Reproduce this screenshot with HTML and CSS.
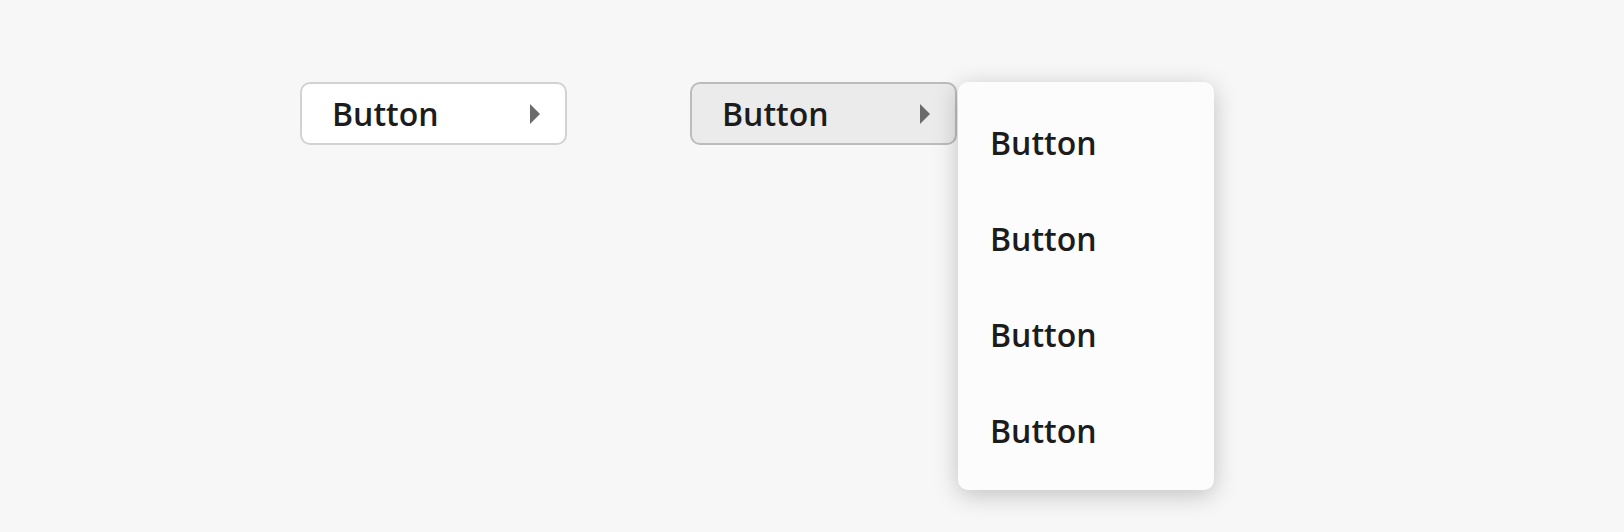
FILE: index.html
```html
<!DOCTYPE html>
<html lang="en">
<head>
<meta charset="utf-8">
<title>Buttons</title>
<link rel="stylesheet" href="styles.css">
</head>
<body>
<div class="stage">
  <button class="btn" type="button">
    <span class="label">Button</span>
    <svg class="caret" width="10" height="20" viewBox="0 0 10 20"><path d="M0 0 L10 10 L0 20 Z"/></svg>
  </button>
  <div class="group">
    <button class="btn btn-active" type="button">
      <span class="label">Button</span>
      <svg class="caret" width="10" height="20" viewBox="0 0 10 20"><path d="M0 0 L10 10 L0 20 Z"/></svg>
    </button>
    <div class="menu">
      <div class="item">Button</div>
      <div class="item">Button</div>
      <div class="item">Button</div>
      <div class="item">Button</div>
    </div>
  </div>
</div>
</body>
</html>
```
FILE: styles.css
```css
html, body {
  margin: 0;
  padding: 0;
  background: #f7f7f7;
  height: 100%;
}
body {
  font-family: "Open Sans", "Noto Sans", sans-serif;
  color: #1c1c1c;
}
.stage {
  display: flex;
  align-items: flex-start;
  gap: 123px;
  padding: 82px 0 0 300px;
}
.group {
  display: flex;
  align-items: flex-start;
}
.btn {
  box-sizing: border-box;
  width: 267px;
  height: 63px;
  display: flex;
  align-items: center;
  justify-content: space-between;
  padding: 0 25px 0 30px;
  margin: 0;
  background: #ffffff;
  border: 2px solid #d2d2d2;
  border-radius: 10px;
  font-family: "Open Sans", "Noto Sans", sans-serif;
  font-size: 32px;
  font-weight: 600;
  color: #1c1c1c;
  cursor: pointer;
}
.btn-active {
  background: #ebebeb;
  border-color: #bcbcbc;
}
.label {
  line-height: 1;
}
.caret {
  display: block;
  fill: #6b6b6b;
}
.menu {
  box-sizing: border-box;
  width: 256px;
  padding: 12px 0;
  margin-left: 1px;
  background: #fcfcfc;
  border-radius: 10px;
  box-shadow: 0 5px 24px rgba(0, 0, 0, 0.22);
}
.item {
  height: 96px;
  display: flex;
  align-items: center;
  padding-left: 32px;
  font-size: 32px;
  font-weight: 600;
  color: #1c1c1c;
}
```
